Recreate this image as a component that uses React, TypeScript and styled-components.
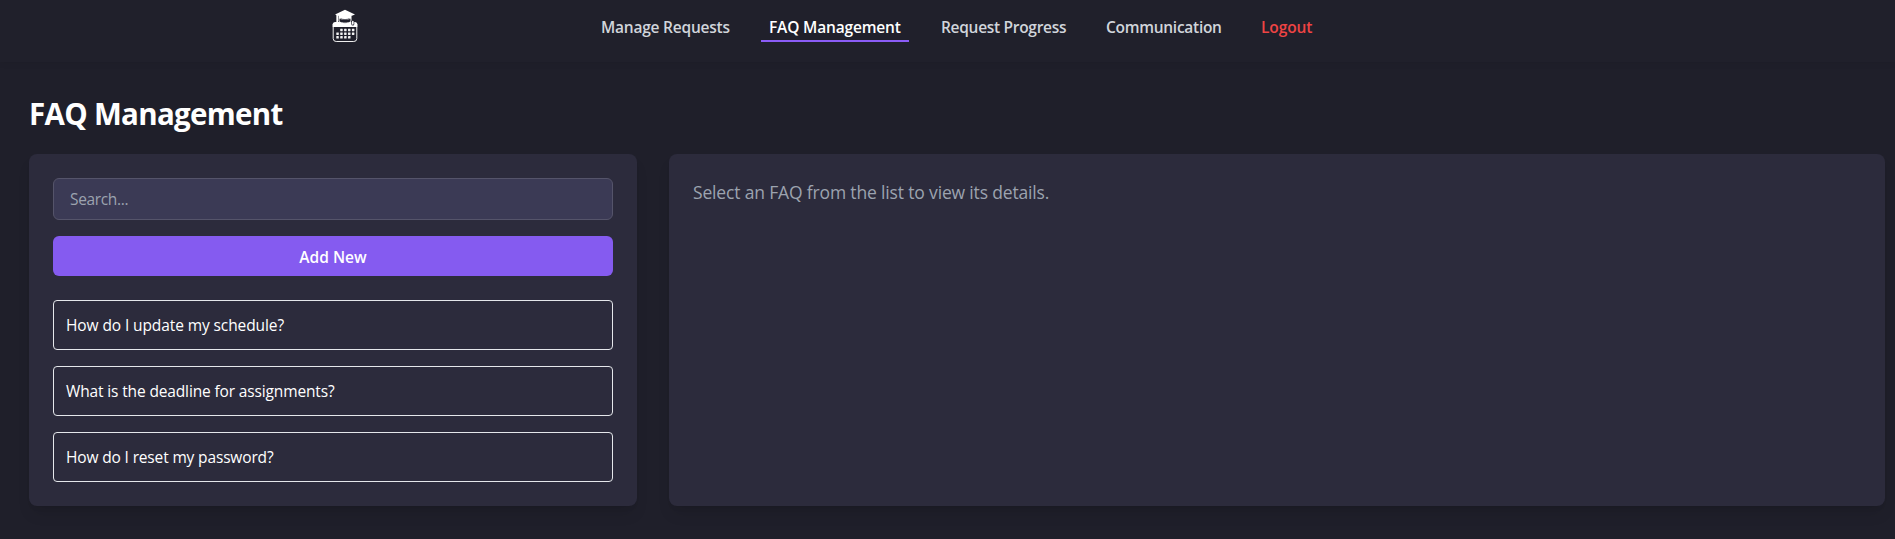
import React, { useState } from "react";
import styled, { createGlobalStyle } from "styled-components";

const GlobalStyle = createGlobalStyle`
  *, *::before, *::after { box-sizing: border-box; }
  body {
    margin: 0;
    background: #1f1f2a;
    color: #fff;
    font: 16px/24px "Segoe UI", "Open Sans", "Noto Sans", sans-serif;
  }
  button, input { font: inherit; }
`;

const Page = styled.div`
  min-height: 539px;
  overflow: hidden;
`;

const Header = styled.header`
  height: 62px;
  padding-left: 325px;
  display: flex;
  align-items: flex-start;
  background: #20202b;
  box-shadow: 0 2px 6px rgba(0, 0, 0, 0.06);
`;

const Logo = styled.svg`
  width: 40px;
  height: 50px;
  margin-right: 228px;
`;

const Nav = styled.nav`
  display: flex;
  gap: 24px;
  padding-top: 10px;
`;

const NavLink = styled.a<{ $width: number; $spacing: number; $active?: boolean; $danger?: boolean }>`
  width: ${(p) => p.$width}px;
  height: 32px;
  padding: 4px 8px;
  border-bottom: 2px solid ${(p) => (p.$active ? "#8b5cf6" : "transparent")};
  color: ${(p) => (p.$danger ? "#ef4444" : p.$active ? "#fff" : "#d1d5db")};
  font-size: 15.5px;
  font-weight: 600;
  line-height: 26px;
  letter-spacing: ${(p) => p.$spacing}px;
  white-space: nowrap;
  text-decoration: none;
`;

const Main = styled.main`
  padding: 34px 10px 32px 29px;
`;

const Title = styled.h1`
  margin: 0 0 22px;
  font-size: 29.5px;
  line-height: 36px;
  font-weight: 700;
  letter-spacing: -0.68px;
`;

const Columns = styled.div`
  display: grid;
  grid-template-columns: 608px 1fr;
  gap: 32px;
`;

const Panel = styled.section`
  min-height: 352px;
  padding: 24px;
  border-radius: 8px;
  background: #2c2b3c;
  box-shadow: 0 10px 15px -3px rgba(0, 0, 0, 0.1), 0 4px 6px -4px rgba(0, 0, 0, 0.1);
`;

const SearchInput = styled.input`
  display: block;
  width: 100%;
  height: 42px;
  padding: 8px 16px;
  border: 1px solid #55546a;
  border-radius: 6px;
  background: #3b3a55;
  color: #fff;
  font-size: 15.5px;
  letter-spacing: -0.35px;
  outline: none;
  &::placeholder { color: #9ca3af; opacity: 1; }
`;

const AddButton = styled.button`
  display: block;
  width: 100%;
  height: 40px;
  margin: 16px 0 24px;
  padding: 1px 0 0;
  border: 0;
  border-radius: 6px;
  background: #855bf0;
  color: #fff;
  font-size: 15.5px;
  font-weight: 600;
  letter-spacing: 0;
`;

const FaqList = styled.ul`
  display: flex;
  flex-direction: column;
  gap: 16px;
  margin: 0;
  padding: 0;
  list-style: none;
`;

const FaqItem = styled.li<{ $spacing: number }>`
  height: 50px;
  padding: 12px;
  border: 1px solid #e5e7eb;
  border-radius: 4px;
  font-size: 15.5px;
  letter-spacing: ${(p) => p.$spacing}px;
  white-space: nowrap;
  cursor: pointer;
`;

const EmptyText = styled.p`
  margin: 0;
  color: #9ca3af;
  font-size: 17.5px;
  line-height: 28px;
  letter-spacing: -0.16px;
`;

const links = [
  { label: "Manage Requests", width: 144, spacing: -0.22 },
  { label: "FAQ Management", width: 148, spacing: -0.17, active: true },
  { label: "Request Progress", width: 141, spacing: -0.3 },
  { label: "Communication", width: 131, spacing: -0.28 },
  { label: "Logout", width: 68, spacing: -0.1, danger: true },
];

const faqs = [
  { question: "How do I update my schedule?", spacing: -0.1 },
  { question: "What is the deadline for assignments?", spacing: -0.14 },
  { question: "How do I reset my password?", spacing: -0.15 },
];

const dots = [
  [1, 2, 3, 4],
  [0, 1, 2, 3, 4],
  [0, 1, 2, 3],
];

function CalendarLogo() {
  return (
    <Logo viewBox="0 0 40 50" fill="none" aria-label="Scheduling">
      <path d="M8.2 24v14.5a3 3 0 0 0 3 3h17.600a3 3 0 0 0 3-3V24" stroke="#eee" strokeWidth="1" />
      <path d="M7.700 27v-2.500a2.500 2.500 0 0 1 2.500-2.500h19.600a2.500 2.500 0 0 1 2.500 2.500V27z" fill="#fff" />
      <path d="M14 16v5.500c2 2.200 10 2.200 12 0V16z" fill="#20202c" stroke="#fff" strokeWidth="1" />
      <path d="M14 16v2.600c3 1.700 9 1.700 12 0V16z" fill="#fff" />
      <path d="M15.500 18.600c2.500 1.300 6.500 1.300 9 0" stroke="#20202c" strokeWidth="0.700" />
      <path d="M10 14.500 20 9.700l10 4.800L20 18.500z" fill="#fff" />
      <path d="M12.200 15v8" stroke="#fff" strokeWidth="1.700" />
      <path d="M27.800 24v-2.500" stroke="#20202c" strokeWidth="3" strokeLinecap="round" />
      <path d="M27.800 24v-2.500" stroke="#fff" strokeWidth="1.600" strokeLinecap="round" />
      {dots.map((row, y) =>
        row.map((x) => (
          <rect key={`${x}-${y}`} x={11.3 + x * 3.9} y={28.700 + y * 3.700} width="2.500" height="2.500" rx="0.400" fill="#f2f2f2" />
        ))
      )}
    </Logo>
  );
}

export default function App() {
  const [query, setQuery] = useState("");
  return (
    <Page>
      <GlobalStyle />
      <Header>
        <CalendarLogo />
        <Nav>
          {links.map((l) => (
            <NavLink key={l.label} $width={l.width} $spacing={l.spacing} $active={l.active} $danger={l.danger}>
              {l.label}
            </NavLink>
          ))}
        </Nav>
      </Header>
      <Main>
        <Title>FAQ Management</Title>
        <Columns>
          <Panel>
            <SearchInput placeholder="Search..." value={query} onChange={(e) => setQuery(e.target.value)} />
            <AddButton>Add New</AddButton>
            <FaqList>
              {faqs
                .filter((f) => f.question.toLowerCase().includes(query.toLowerCase()))
                .map((f) => (
                  <FaqItem key={f.question} $spacing={f.spacing}>
                    {f.question}
                  </FaqItem>
                ))}
            </FaqList>
          </Panel>
          <Panel>
            <EmptyText>Select an FAQ from the list to view its details.</EmptyText>
          </Panel>
        </Columns>
      </Main>
    </Page>
  );
}
